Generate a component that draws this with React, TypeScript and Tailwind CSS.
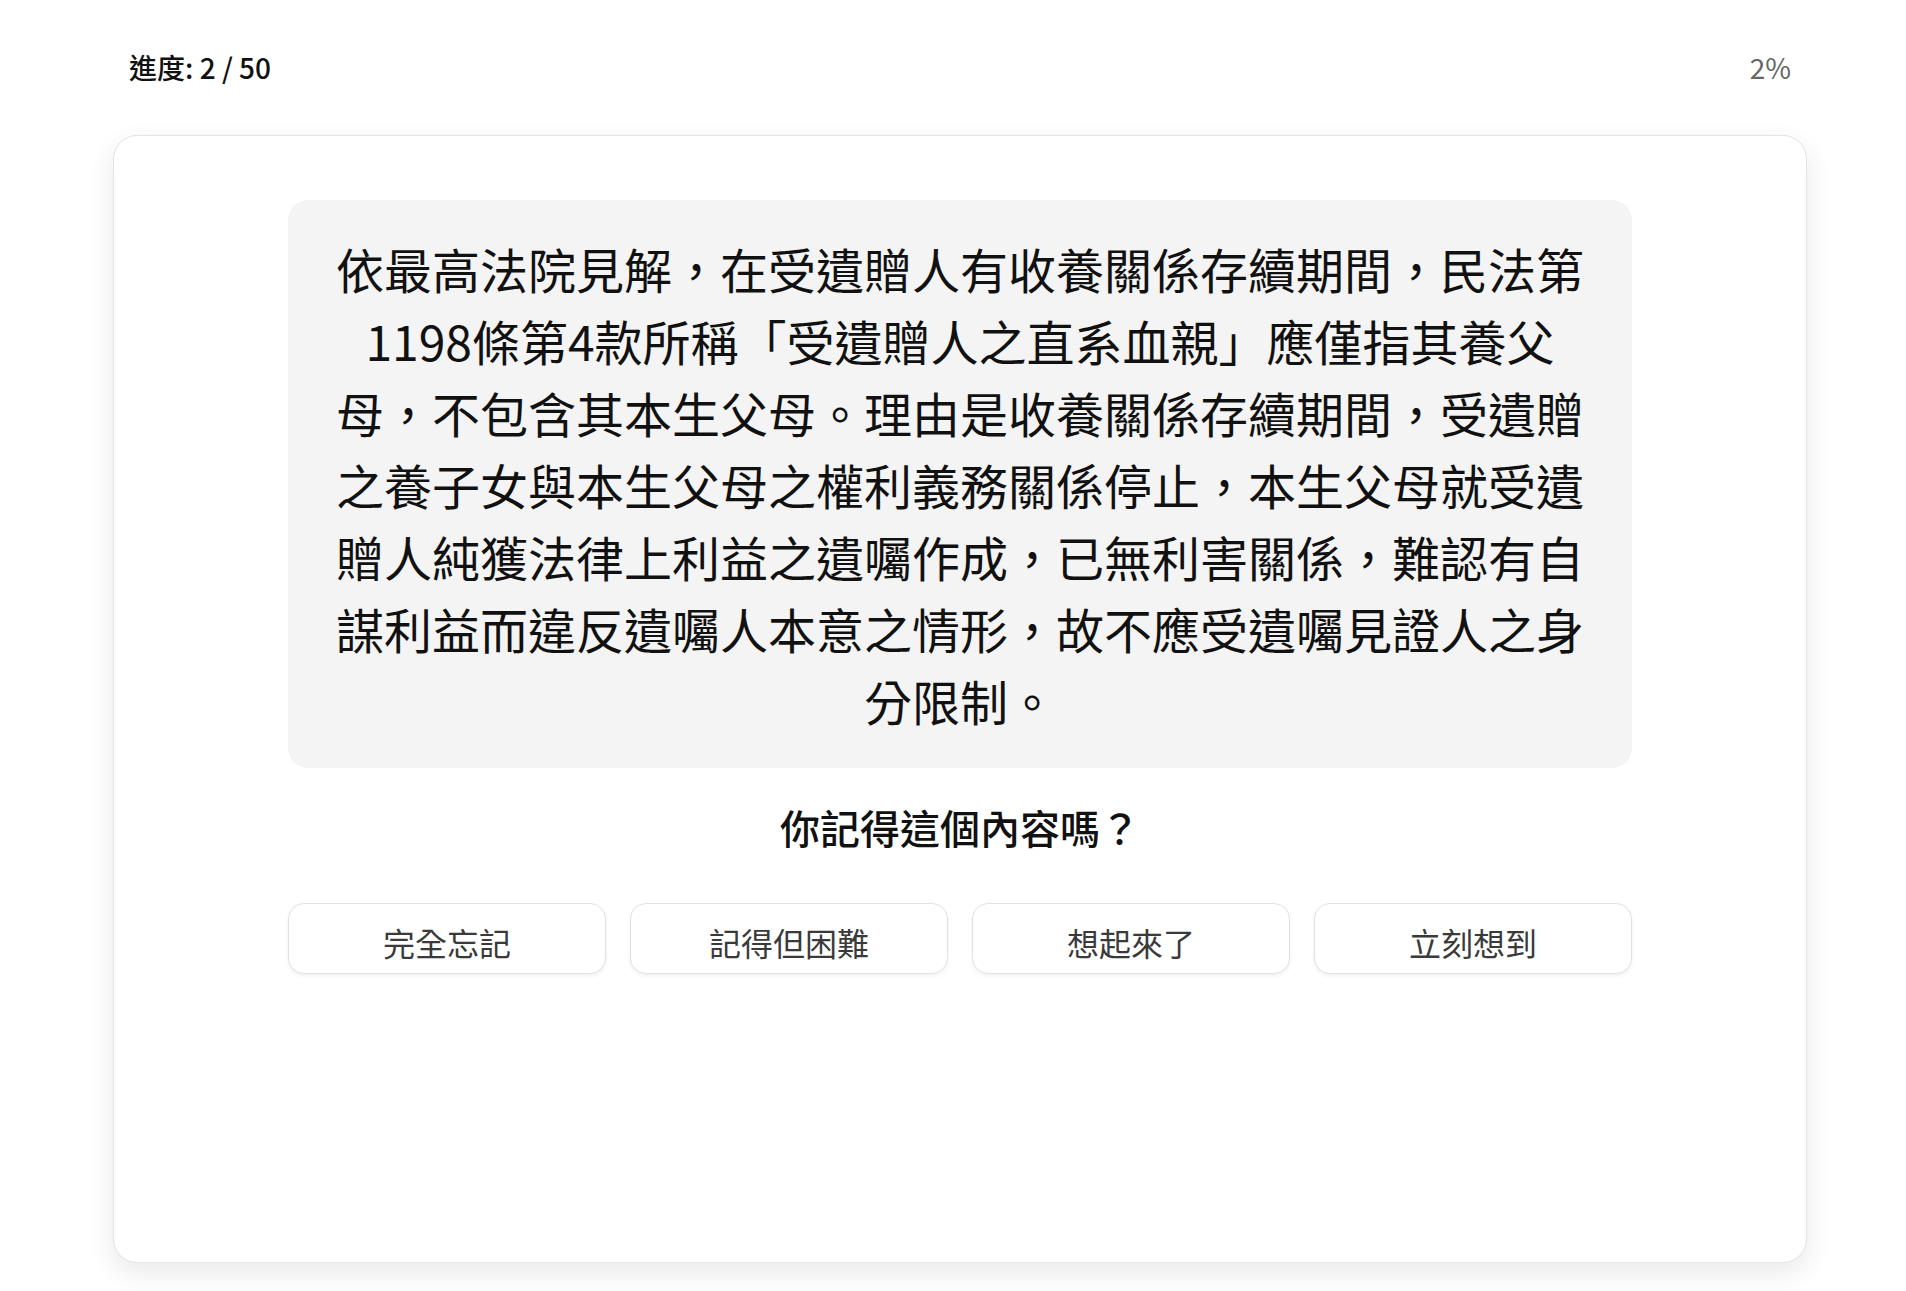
import React from "react";

const buttons = ["完全忘記", "記得但困難", "想起來了", "立刻想到"];

export default function App() {
  return (
    <div className="h-screen flex flex-col bg-white pl-[113px] pr-[99px] pt-[47px] pb-[28px] font-['Noto_Sans_CJK_TC','Noto_Sans',sans-serif]">
      <header className="h-10 px-4 mb-12 flex items-center justify-between text-[28px] leading-10">
        <span className="font-medium text-[#111111]">進度: 2 / 50</span>
        <span className="text-[#666666]">2%</span>
      </header>
      <div className="flex-1 rounded-3xl border border-[#e4e4e4] bg-white p-16 shadow-[0_10px_28px_rgba(0,0,0,0.09)]">
        <div className="max-w-[1344px] mx-auto">
          <div className="rounded-[20px] bg-[#f4f4f4] px-10 py-8 text-center text-[48px] leading-[72px] text-[#111111]">
            依最高法院見解，在受遺贈人有收養關係存續期間，民法第1198條第4款所稱「受遺贈人之直系血親」應僅指其養父母，不包含其本生父母。理由是收養關係存續期間，受遺贈之養子女與本生父母之權利義務關係停止，本生父母就受遺贈人純獲法律上利益之遺囑作成，已無利害關係，難認有自謀利益而違反遺囑人本意之情形，故不應受遺囑見證人之身分限制。
          </div>
          <p className="mt-[29px] text-center text-[40px] leading-[60px] font-medium text-[#111111]">
            你記得這個內容嗎？
          </p>
          <div className="mt-[46px] grid grid-cols-4 gap-6">
            {buttons.map((b) => (
              <button
                key={b}
                className="h-[71px] pt-[6px] rounded-2xl border border-[#e2e2e2] bg-white text-[32px] leading-[48px] text-[#3a3a3a] shadow-[0_2px_4px_rgba(0,0,0,0.06)]"
              >
                {b}
              </button>
            ))}
          </div>
        </div>
      </div>
    </div>
  );
}
